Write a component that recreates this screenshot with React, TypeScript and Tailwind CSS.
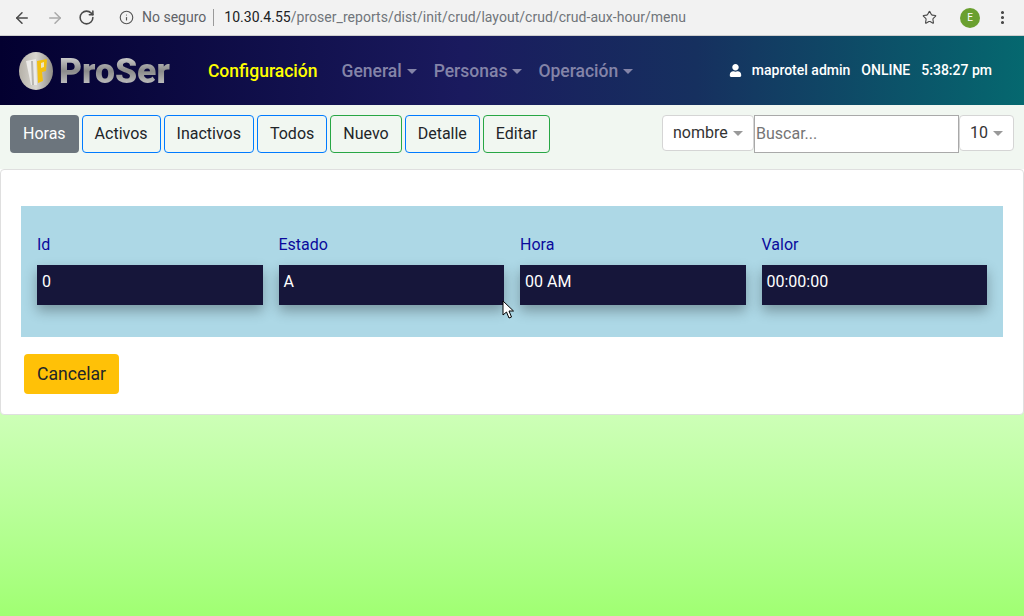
import { ArrowLeft, ArrowRight, Info, MoreVertical, RotateCw, Star } from "lucide-react";
import { FaUser } from "react-icons/fa";

const TOOLBAR = [
  { label: "Activos", border: "border-[#007bff]" },
  { label: "Inactivos", border: "border-[#007bff]" },
  { label: "Todos", border: "border-[#007bff]" },
  { label: "Nuevo", border: "border-[#28a745]" },
  { label: "Detalle", border: "border-[#007bff]" },
  { label: "Editar", border: "border-[#28a745]" },
];

const FIELDS = [
  { label: "Id", value: "0" },
  { label: "Estado", value: "A" },
  { label: "Hora", value: "00 AM" },
  { label: "Valor", value: "00:00:00" },
];

function Caret({ className }: { className: string }) {
  return <span className={`inline-block border-x-[5px] border-t-[5px] border-x-transparent ${className}`} />;
}

/** Logo ProSer — circulo plateado + marca amarilla */
function Logo() {
  return (
    <div className="flex items-center">
      <svg width="36" height="38" viewBox="0 0 36 38">
        <defs>
          <linearGradient id="disc" x1="0" y1="0" x2="1" y2="0">
            <stop offset="0" stopColor="#b5b1a8" />
            <stop offset="0.5" stopColor="#d8d6d0" />
            <stop offset="1" stopColor="#8f8c86" />
          </linearGradient>
        </defs>
        <ellipse cx="18" cy="19" rx="17" ry="19" fill="url(#disc)" />
        <path d="M8 9 L18 7 L19 33 L13 33 Z" fill="#ecebe8" />
        <path d="M13 9 L15 9 L16 33 L14 33 Z" fill="#b8b6b0" />
        <path d="M19 9 L29 7 L28 19 L24 20 L25 29 L20 31 Z" fill="#f2c010" />
        <path d="M23 11 L26 10 L26 15 L23 16 Z" fill="#efe6c0" />
      </svg>
      <span className="ml-[5px] bg-gradient-to-b from-[#e8e8e8] via-[#8a8a8a] to-[#d8d8d8] bg-clip-text text-[35.5px] leading-[38px] font-black text-transparent font-['Roboto',sans-serif]">
        ProSer
      </span>
    </div>
  );
}

function MouseCursor() {
  return (
    <svg className="absolute left-[502px] top-[300px]" width="13" height="20" viewBox="0 0 13 20">
      <path d="M1 1 L1 15 L4.5 12 L7 18 L9.5 17 L7 11 L11.5 11 Z" fill="#fff" stroke="#000" strokeWidth="1" />
    </svg>
  );
}

export default function App() {
  return (
    <div className="relative flex h-[616px] w-[1024px] flex-col overflow-hidden bg-gradient-to-b from-white from-[27%] to-[#a0ff72] font-['Roboto',sans-serif]">
      {/* barra del navegador */}
      <div className="flex h-9 shrink-0 items-center border-b border-[#cfcfcf] bg-[#f2f2f2]">
        <ArrowLeft className="ml-[13px] size-[18px] text-[#4a4a4a]" strokeWidth={2} />
        <ArrowRight className="ml-[15px] size-[18px] text-[#a9a9a9]" strokeWidth={2} />
        <RotateCw className="ml-[14px] size-[17px] text-[#4a4a4a]" strokeWidth={2.2} />
        <Info className="ml-[24px] size-[15px] text-[#555]" strokeWidth={1.8} />
        <span className="ml-[8px] text-[14px] text-[#5f6368]">No seguro</span>
        <span className="ml-[7px] h-[17px] w-px bg-[#9a9a9a]" />
        <span className="ml-[10px] text-[14px] tracking-[0.03px] text-[#70757a]">
          <span className="text-[#202124]">10.30.4.55</span>/proser_reports/dist/init/crud/layout/crud/crud-aux-hour/menu
        </span>
        <Star className="ml-auto size-[15px] text-[#4a4a4a]" strokeWidth={1.8} />
        <span className="ml-[23px] flex size-5 items-center justify-center rounded-full bg-[#6aa02f] text-[10px] text-white">E</span>
        <MoreVertical className="ml-[14px] mr-[13px] size-[17px] text-[#444]" strokeWidth={2.4} />
      </div>

      {/* navbar */}
      <nav className="flex h-[69px] shrink-0 items-center bg-[linear-gradient(90deg,#030030_0%,#1a1a5e_45%,#16305f_68%,#05686f_100%)] pl-[18px] pr-[32px]">
        <Logo />
        <span className="ml-[38px] pt-[2px] text-[17.5px] font-medium text-[#ffff00]">Configuración</span>
        <span className="ml-6 flex items-center gap-[5px] pt-[2px] text-[17.5px] font-medium text-[#8484a8]">
          General <Caret className="border-t-[#8484a8]" />
        </span>
        <span className="ml-[17px] flex items-center gap-[5px] pt-[2px] text-[17.5px] font-medium text-[#8484a8]">
          Personas <Caret className="border-t-[#8484a8]" />
        </span>
        <span className="ml-4 flex items-center gap-[5px] pt-[2px] text-[17.5px] font-medium text-[#8484a8]">
          Operación <Caret className="border-t-[#8484a8]" />
        </span>
        <FaUser className="ml-auto size-[13px] text-white" />
        <span className="ml-[10px] text-[14px] font-medium text-white">maprotel admin</span>
        <span className="ml-[11px] text-[14px] font-medium text-white">ONLINE</span>
        <span className="ml-[11px] text-[14px] font-medium text-white">5:38:27 pm</span>
      </nav>

      {/* barra de acciones */}
      <div className="flex h-16 shrink-0 items-start bg-[#f1f7f1] pl-[10px] pr-[10px] pt-[10px]">
        <div className="flex gap-[3px]">
          <button className="h-[38px] rounded-[4px] bg-[#6c757d] px-[13px] text-[16px] text-white">Horas</button>
          {TOOLBAR.map((item) => (
            <button key={item.label} className={`h-[38px] rounded-[4px] border px-3 text-[16px] text-[#212529] ${item.border}`}>
              {item.label}
            </button>
          ))}
        </div>
        <div className="ml-auto flex items-start">
          <button className="flex h-9 w-[92px] items-center gap-[5px] rounded-[4px] border border-[#d5d5d5] bg-white pl-[10px] text-[16px] text-[#333]">
            nombre <Caret className="border-t-[#999]" />
          </button>
          <div className="flex h-[38px] w-[205px] items-center border border-[#a9a9a9] bg-white pl-[1px] text-[16px] text-[#757575]">
            Buscar...
          </div>
          <button className="flex h-9 w-[55px] items-center gap-[5px] rounded-[4px] border border-[#d5d5d5] bg-white pl-[10px] text-[16px] text-[#333]">
            10 <Caret className="border-t-[#999]" />
          </button>
        </div>
      </div>

      {/* tarjeta */}
      <div className="h-[246px] shrink-0 rounded-[4px] border border-[#dfdfdf] bg-white px-5 pt-9">
        <div className="grid h-[131px] grid-cols-4 gap-4 bg-[#add8e6] px-4 pt-[27px]">
          {FIELDS.map((field) => (
            <div key={field.label}>
              <div className="h-[32px] text-[16px] leading-[24px] text-[#0a0a9c]">{field.label}</div>
              <div className="h-10 bg-[#16163a] px-[5px] pt-[5px] text-[16px] leading-[24px] text-white shadow-[0_6px_12px_rgba(0,0,0,0.3)]">
                {field.value}
              </div>
            </div>
          ))}
        </div>
        <button className="ml-[3px] mt-[17px] h-10 rounded-[4px] bg-[#ffc107] px-[13px] text-[17.6px] text-[#212529]">Cancelar</button>
      </div>

      <MouseCursor />
    </div>
  );
}
